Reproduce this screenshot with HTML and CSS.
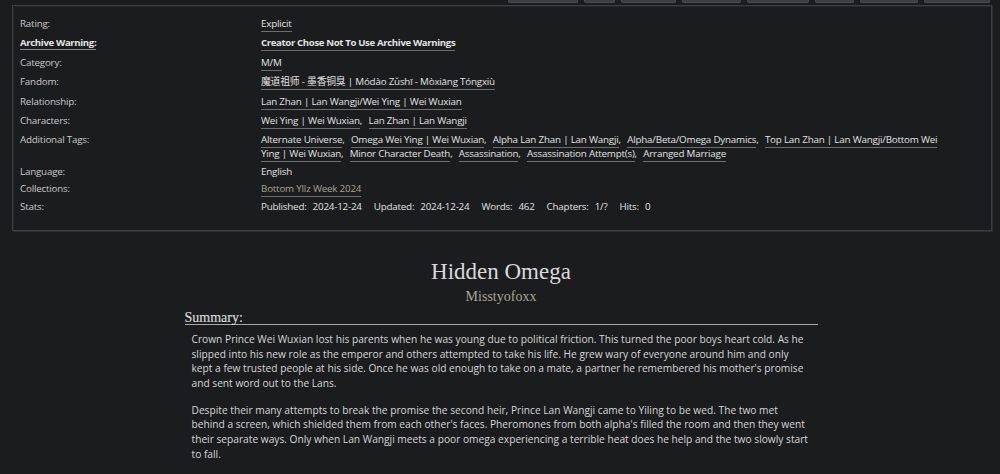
FILE: index.html
```html
<!DOCTYPE html>
<html lang="en">
<head>
<meta charset="utf-8">
<title>Hidden Omega</title>
<link rel="stylesheet" href="styles.css">
</head>
<body>
<div class="page">
  <ul class="actions">
    <li class="btn b1"></li>
    <li class="btn b2"></li>
    <li class="btn b3"></li>
    <li class="btn b4"></li>
    <li class="btn b5"></li>
    <li class="btn b6"></li>
    <li class="btn b7"></li>
    <li class="btn b8"></li>
  </ul>
  <div class="meta">
    <dl class="meta-list">
      <dt>Rating:</dt>
      <dd><a class="tag">Explicit</a></dd>
      <dt class="warn">Archive Warning:</dt>
      <dd><a class="tag strong">Creator Chose Not To Use Archive Warnings</a></dd>
      <dt>Category:</dt>
      <dd><a class="tag">M/M</a></dd>
      <dt>Fandom:</dt>
      <dd><a class="tag">魔道祖师 - 墨香铜臭 | Módào Zǔshī - Mòxiāng Tóngxiù</a></dd>
      <dt>Relationship:</dt>
      <dd><a class="tag">Lan Zhan | Lan Wangji/Wei Ying | Wei Wuxian</a></dd>
      <dt>Characters:</dt>
      <dd><a class="tag">Wei Ying | Wei Wuxian</a><span class="sep">,</span> <a class="tag">Lan Zhan | Lan Wangji</a></dd>
      <dt>Additional Tags:</dt>
      <dd class="multi"><a class="tag">Alternate Universe</a><span class="sep">,</span> <a class="tag">Omega Wei Ying | Wei Wuxian</a><span class="sep">,</span> <a class="tag">Alpha Lan Zhan | Lan Wangji</a><span class="sep">,</span> <a class="tag">Alpha/Beta/Omega Dynamics</a><span class="sep">,</span> <a class="tag">Top Lan Zhan | Lan Wangji/Bottom Wei Ying | Wei Wuxian</a><span class="sep">,</span> <a class="tag">Minor Character Death</a><span class="sep">,</span> <a class="tag">Assassination</a><span class="sep">,</span> <a class="tag">Assassination Attempt(s)</a><span class="sep">,</span> <a class="tag">Arranged Marriage</a></dd>
      <dt class="tight">Language:</dt>
      <dd class="tight">English</dd>
      <dt class="tight">Collections:</dt>
      <dd class="tight"><a class="tag coll">Bottom Yllz Week 2024</a></dd>
      <dt class="tight">Stats:</dt>
      <dd class="tight stats">
        <span class="stat"><span class="k">Published:</span><span class="v">2024-12-24</span></span>
        <span class="stat"><span class="k">Updated:</span><span class="v">2024-12-24</span></span>
        <span class="stat"><span class="k">Words:</span><span class="v">462</span></span>
        <span class="stat"><span class="k">Chapters:</span><span class="v">1/?</span></span>
        <span class="stat"><span class="k">Hits:</span><span class="v">0</span></span>
      </dd>
    </dl>
  </div>
  <div class="preface">
    <h2 class="title">Hidden Omega</h2>
    <h3 class="byline">Misstyofoxx</h3>
    <div class="summary">
      <h3 class="heading">Summary:</h3>
      <blockquote class="userstuff">
        <p>Crown Prince Wei Wuxian lost his parents when he was young due to political friction. This turned the poor boys heart cold. As he slipped into his new role as the emperor and others attempted to take his life. He grew wary of everyone around him and only kept a few trusted people at his side. Once he was old enough to take on a mate, a partner he remembered his mother's promise and sent word out to the Lans.</p>
        <p>Despite their many attempts to break the promise the second heir, Prince Lan Wangji came to Yiling to be wed. The two met behind a screen, which shielded them from each other's faces. Pheromones from both alpha's filled the room and then they went their separate ways. Only when Lan Wangji meets a poor omega experiencing a terrible heat does he help and the two slowly start to fall.</p>
      </blockquote>
    </div>
  </div>
</div>
</body>
</html>
```

FILE: styles.css
```css
html, body {
  margin: 0;
  padding: 0;
  background: #1b1c1e;
}
body {
  font-family: "Open Sans", "Noto Sans CJK SC", sans-serif;
  color: #d6d6d6;
  overflow: hidden;
}
.page {
  width: 1000px;
}
.actions {
  list-style: none;
  margin: 0;
  padding: 0 10px 0 0;
  height: 3px;
  overflow: hidden;
  display: flex;
  justify-content: flex-end;
  gap: 6px;
}
.btn {
  height: 3px;
  background: #3c3d40;
  border: 1px solid #4a4b4e;
  border-top: none;
  box-sizing: border-box;
  border-radius: 0 0 2px 2px;
}
.b1 { width: 70px; }
.b2 { width: 31px; }
.b3 { width: 55px; }
.b4 { width: 59px; }
.b5 { width: 62px; }
.b6 { width: 39px; }
.b7 { width: 58px; }
.b8 { width: 66px; }

.meta {
  margin: 2px 8px 0 12px;
  border: 1px solid #3d3e41;
  box-shadow: inset 1px 1px 0 #252628, 1px 1px 0 #2c2d2f;
  padding: 11px 7px 14px 7px;
  height: 199px;
}
.meta-list {
  margin: 0;
  display: grid;
  grid-template-columns: 241px 1fr;
  row-gap: 5.4px;
  font-size: 9.8px;
  letter-spacing: -0.2px;
  line-height: 14px;
}
.meta-list dt {
  color: #c9c9c9;
}
.meta-list dt.warn {
  font-weight: bold;
  color: #e4e4e4;
  font-size: 9.6px;
  letter-spacing: -0.35px;
  justify-self: start;
  border-bottom: 1px solid #8a8a8a;
  line-height: 13px;
}
.meta-list dd {
  margin: 0;
  color: #e2e2e2;
}
.meta-list .tight {
  margin-top: -2px;
}
.tag {
  color: #e2e2e2;
  text-decoration: none;
  border-bottom: 1px solid #6d6d6d;
  padding-bottom: 1px;
}
.sep {
  padding-right: 4px;
}
.tag.strong {
  font-weight: bold;
  font-size: 9.6px;
  letter-spacing: -0.35px;
}
.tag.coll {
  color: #a9a293;
}
.meta-list dd.multi {
  padding-right: 45px;
}
.stats {
  display: flex;
  gap: 12px;
}
.stat .k {
  margin-right: 6px;
}

.preface {
  width: 633px;
  margin: 0 auto;
  padding-left: 2px;
}
.title {
  margin: 26px 0 0;
  text-align: center;
  font-family: "Liberation Serif", "DejaVu Serif", serif;
  font-weight: normal;
  font-size: 23px;
  line-height: 30px;
  color: #d9d9d9;
}
.byline {
  margin: 1px 0 0;
  text-align: center;
  font-family: "Liberation Serif", "DejaVu Serif", serif;
  font-weight: normal;
  font-size: 14px;
  line-height: 18px;
  color: #aba493;
}
.heading {
  margin: 6px 0 0;
  font-family: "Liberation Serif", "DejaVu Serif", serif;
  font-weight: normal;
  font-size: 14px;
  line-height: 11.5px;
  color: #d8d8d8;
  border-bottom: 1px solid #a8a8a8;
  -webkit-text-stroke: 0.2px #d8d8d8;
}
.userstuff {
  margin: 7.5px 7.5px 0 7px;
  font-size: 10.2px;
  line-height: 14.6px;
  color: #d7d7d7;
}
.userstuff p {
  margin: 0 0 12.5px;
}
```
